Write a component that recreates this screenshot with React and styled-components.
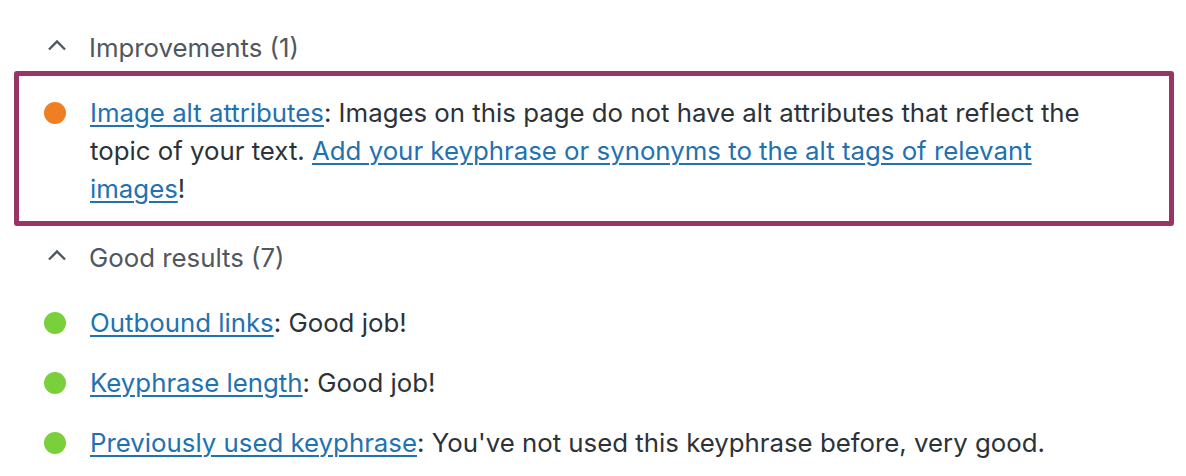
import React from 'react'
import styled, { createGlobalStyle } from 'styled-components';

const GlobalStyle = createGlobalStyle`
  body {
    margin: 0;
    background: #fff;
    font-family: Inter, "Liberation Sans", Arial, sans-serif;
  }
`;

const results = {
    improvements: [
        {
            color: '#ef7f22',
            link: 'Image alt attributes',
            text: ': Images on this page do not have alt attributes that reflect the topic of your text. ',
            link2: 'Add your keyphrase or synonyms to the alt tags of relevant images',
            end: '!',
        },
    ],
    good: [
        { color: '#7ad03a', link: 'Outbound links', text: ': Good job!' },
        { color: '#7ad03a', link: 'Keyphrase length', text: ': Good job!' },
        { color: '#7ad03a', link: 'Previously used keyphrase', text: ": You've not used this keyphrase before, very good." },
    ],
};

function Chevron() {
    return (
        <svg width="20" height="12" viewBox="0 0 20 12">
            <polyline points="2,10.5 10,2.5 18,10.5" fill="none" stroke="#50575e" strokeWidth="2.4" />
        </svg>
    );
}

function Result({ item }) {
    return (
        <Item>
            <Dot color={item.color} />
            <Text>
                <a href="#">{item.link}</a>{item.text}
                {item.link2 && <a href="#">{item.link2}</a>}
                {item.end}
            </Text>
        </Item>
    );
}

function App() {
    return (
        <Wrapper>
            <GlobalStyle />
            <Heading>
                <Chevron />
                <span>Improvements (1)</span>
            </Heading>
            <Highlight>
                {results.improvements.map((item, i) => <Result key={i} item={item} />)}
            </Highlight>
            <Heading second>
                <Chevron />
                <span>Good results (7)</span>
            </Heading>
            <List>
                {results.good.map((item, i) => <Result key={i} item={item} />)}
            </List>
        </Wrapper>
    );
}

const Wrapper = styled.div`
   width: 1160px;
   padding: 28px 0 0 14px;
`;

const Heading = styled.div`
   display: flex;
   align-items: center;
   gap: 22px;
   padding-left: 33px;
   height: 38px;
   margin-top: ${props => props.second ? '12px' : '0'};
   font-size: 25.8px;
   color: #50575e;
   svg{
       margin-bottom: 4px;
   }
`;

const Highlight = styled.div`
   margin-top: 5px;
   border: 5px solid #9a3366;
   border-radius: 3px;
   padding: 18px 0 13px 25px;
`;

const List = styled.div`
   display: flex;
   flex-direction: column;
   gap: 22px;
   margin-top: 28px;
   padding-left: 30px;
`;

const Item = styled.div`
   display: flex;
   align-items: flex-start;
   gap: 24px;
`;

const Dot = styled.span`
   flex: none;
   width: 22px;
   height: 22px;
   margin-top: 8px;
   border-radius: 50%;
   background: ${props => props.color};
`;

const Text = styled.p`
   margin: 0;
   max-width: 1005px;
   font-size: 25.8px;
   line-height: 38px;
   color: #2c3338;
   a{
       color: #2271b1;
       text-decoration: underline;
       text-underline-offset: 3px;
       text-decoration-thickness: 1.5px;
   }
`;

export default App
